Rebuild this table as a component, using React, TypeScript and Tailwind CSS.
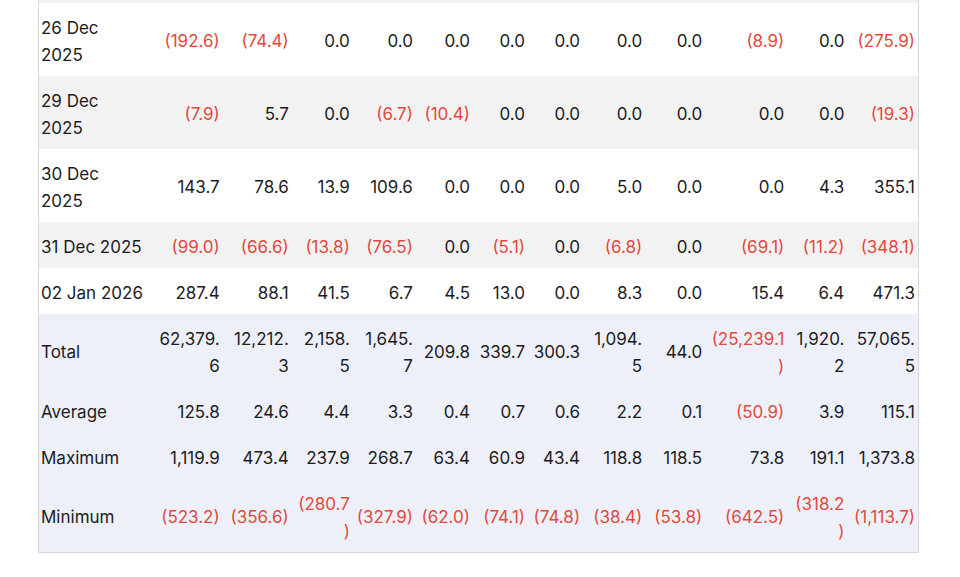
import React from 'react'

// column widths in px, 13 columns
const widths = [113, 71, 69, 61, 63, 57, 55, 55, 62, 60, 82, 60, 71]

type Row = { label: string; values: string[] }

const rows: Row[] = [
  {
    label: '26 Dec\n2025',
    values: ['(192.6)', '(74.4)', '0.0', '0.0', '0.0', '0.0', '0.0', '0.0', '0.0', '(8.9)', '0.0', '(275.9)'],
  },
  {
    label: '29 Dec\n2025',
    values: ['(7.9)', '5.7', '0.0', '(6.7)', '(10.4)', '0.0', '0.0', '0.0', '0.0', '0.0', '0.0', '(19.3)'],
  },
  {
    label: '30 Dec\n2025',
    values: ['143.7', '78.6', '13.9', '109.6', '0.0', '0.0', '0.0', '5.0', '0.0', '0.0', '4.3', '355.1'],
  },
  {
    label: '31 Dec 2025',
    values: ['(99.0)', '(66.6)', '(13.8)', '(76.5)', '0.0', '(5.1)', '0.0', '(6.8)', '0.0', '(69.1)', '(11.2)', '(348.1)'],
  },
  {
    label: '02 Jan 2026',
    values: ['287.4', '88.1', '41.5', '6.7', '4.5', '13.0', '0.0', '8.3', '0.0', '15.4', '6.4', '471.3'],
  },
]

const summary: Row[] = [
  {
    label: 'Total',
    values: ['62,379.\n6', '12,212.\n3', '2,158.\n5', '1,645.\n7', '209.8', '339.7', '300.3', '1,094.\n5', '44.0', '(25,239.1\n)', '1,920.\n2', '57,065.\n5'],
  },
  {
    label: 'Average',
    values: ['125.8', '24.6', '4.4', '3.3', '0.4', '0.7', '0.6', '2.2', '0.1', '(50.9)', '3.9', '115.1'],
  },
  {
    label: 'Maximum',
    values: ['1,119.9', '473.4', '237.9', '268.7', '63.4', '60.9', '43.4', '118.8', '118.5', '73.8', '191.1', '1,373.8'],
  },
  {
    label: 'Minimum',
    values: ['(523.2)', '(356.6)', '(280.7\n)', '(327.9)', '(62.0)', '(74.1)', '(74.8)', '(38.4)', '(53.8)', '(642.5)', '(318.2\n)', '(1,113.7)'],
  },
]

function Cells({ row }: { row: Row }) {
  return (
    <>
      <td className="pl-[2px] pr-[3px] pt-[11.5px] pb-[7.5px] text-left align-middle whitespace-pre-line">{row.label}</td>
      {row.values.map((v, i) => (
        <td
          key={i}
          className={
            'px-[3px] pt-[11.5px] pb-[7.5px] text-right align-middle whitespace-pre-line ' +
            (v.startsWith('(') ? 'text-[#e4493d]' : '')
          }
        >
          {v}
        </td>
      ))}
    </>
  )
}

export default function App() {
  return (
    <div
      className="w-[960px] h-[577px] bg-white overflow-hidden pl-[38px] text-[17px] leading-[27px] text-[#1c1c1e]"
      style={{ fontFamily: 'Inter, "Noto Sans", sans-serif' }}
    >
      <table className="table-fixed border-collapse w-[881px] border-x border-b border-[#d7d7d7]">
        <colgroup>
          {widths.map((w, i) => (
            <col key={i} style={{ width: w }} />
          ))}
        </colgroup>
        <tbody>
          <tr className="bg-[#f2f2f2] h-[3px]">
            {widths.map((_, i) => (
              <td key={i} className="p-0 h-[3px]" />
            ))}
          </tr>
          {rows.map((r, i) => (
            <tr key={r.label} className={i % 2 === 0 ? 'bg-white' : 'bg-[#f2f2f2]'}>
              <Cells row={r} />
            </tr>
          ))}
          {summary.map(r => (
            <tr key={r.label} className="bg-[#eef0f9]">
              <Cells row={r} />
            </tr>
          ))}
        </tbody>
      </table>
    </div>
  )
}
